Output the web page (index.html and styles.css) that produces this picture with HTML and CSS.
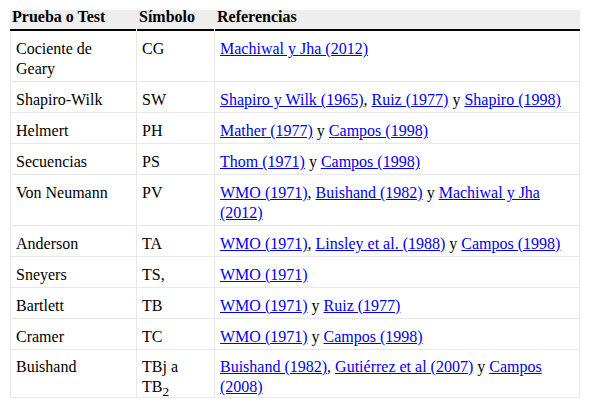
FILE: index.html
```html
<!DOCTYPE html>
<html lang="es">
<head>
<meta charset="utf-8">
<title>Pruebas de homogeneidad</title>
<link rel="stylesheet" href="styles.css">
</head>
<body>
<table class="tests">
  <colgroup>
    <col class="c1">
    <col class="c2">
    <col class="c3">
  </colgroup>
  <thead>
    <tr>
      <th>Prueba o Test</th>
      <th>Símbolo</th>
      <th>Referencias</th>
    </tr>
  </thead>
  <tbody>
    <tr>
      <td>Cociente de Geary</td>
      <td>CG</td>
      <td><a href="#">Machiwal y Jha (2012)</a></td>
    </tr>
    <tr>
      <td>Shapiro-Wilk</td>
      <td>SW</td>
      <td><a href="#">Shapiro y Wilk (1965)</a>, <a href="#">Ruiz (1977)</a> y <a href="#">Shapiro (1998)</a></td>
    </tr>
    <tr>
      <td>Helmert</td>
      <td>PH</td>
      <td><a href="#">Mather (1977)</a> y <a href="#">Campos (1998)</a></td>
    </tr>
    <tr>
      <td>Secuencias</td>
      <td>PS</td>
      <td><a href="#">Thom (1971)</a> y <a href="#">Campos (1998)</a></td>
    </tr>
    <tr>
      <td>Von Neumann</td>
      <td>PV</td>
      <td><a href="#">WMO (1971)</a>, <a href="#">Buishand (1982)</a> y <a href="#">Machiwal y Jha (2012)</a></td>
    </tr>
    <tr>
      <td>Anderson</td>
      <td>TA</td>
      <td><a href="#">WMO (1971)</a>, <a href="#">Linsley et al. (1988)</a> y <a href="#">Campos (1998)</a></td>
    </tr>
    <tr>
      <td>Sneyers</td>
      <td>TS,</td>
      <td><a href="#">WMO (1971)</a></td>
    </tr>
    <tr>
      <td>Bartlett</td>
      <td>TB</td>
      <td><a href="#">WMO (1971)</a> y <a href="#">Ruiz (1977)</a></td>
    </tr>
    <tr>
      <td>Cramer</td>
      <td>TC</td>
      <td><a href="#">WMO (1971)</a> y <a href="#">Campos (1998)</a></td>
    </tr>
    <tr class="last">
      <td>Buishand</td>
      <td>TBj a<br>TB<sub>2</sub></td>
      <td><a href="#">Buishand (1982)</a>, <a href="#">Gutiérrez et al (2007)</a> y <a href="#">Campos (2008)</a></td>
    </tr>
  </tbody>
</table>
</body>
</html>
```
FILE: styles.css
```css
html, body {
  background: #fff;
}
body {
  margin: 0;
  padding: 10px;
  font-family: "Liberation Serif", "Times New Roman", serif;
  font-size: 16px;
  color: #000;
}
.tests {
  width: 570px;
  border-collapse: separate;
  border-spacing: 0;
  table-layout: fixed;
}
.c1 { width: 127px; }
.c2 { width: 78px; }
.c3 { width: 365px; }

.tests th {
  text-align: left;
  font-weight: bold;
  line-height: 14px;
  height: 14px;
  padding: 0 2px 7px;
  vertical-align: top;
  background:
    linear-gradient(#000, #000) left bottom / calc(100% - 1px) 2px no-repeat,
    linear-gradient(#fff, #fff) left bottom / 100% 2px no-repeat,
    #eee;
}
.tests th:last-child {
  background:
    linear-gradient(#000, #000) left bottom / 100% 2px no-repeat,
    #eee;
}
.tests td {
  line-height: 20px;
  padding: 8px 5px 2px;
  vertical-align: top;
  border-right: 1px solid #e8e8e8;
  border-bottom: 1px solid #e8e8e8;
}
.tests td:first-child {
  border-left: 1px solid #e8e8e8;
}
.tests .last td {
  padding-top: 7px;
  padding-bottom: 0;
}
.tests sub {
  line-height: 0;
}
.tests a {
  color: #00e;
  text-decoration: underline;
}
```
